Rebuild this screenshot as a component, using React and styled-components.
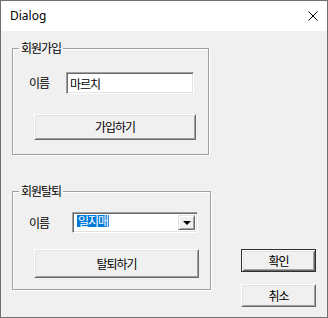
import React from "react";
import styled, { createGlobalStyle, css } from "styled-components";

const Global = createGlobalStyle`
  html, body { margin: 0; padding: 0; background: #f0f0f0; }
  * { box-sizing: border-box; }
`;

const KFONT = `"Noto Sans CJK KR", "Noto Sans", sans-serif`;

const Window = styled.div`
  width: 328px;
  height: 318px;
  border: 1px solid #6f6f6f;
  display: flex;
  flex-direction: column;
  background: #f0f0f0;
`;

const TitleBar = styled.div`
  height: 30px;
  flex: none;
  background: #ffffff;
  display: flex;
  align-items: center;
  justify-content: space-between;
  padding: 0 9px 0 9px;
  font-family: "Noto Sans", sans-serif;
  font-size: 12px;
  color: #000;
`;

const Title = styled.span`
  line-height: 16px;
  margin-top: -1px;
`;

const CloseIcon = styled.svg`
  width: 10px;
  height: 10px;
  display: block;
`;

const Client = styled.div`
  flex: 1;
  display: flex;
  padding: 17px 0 0 11px;
  font-family: ${KFONT};
  font-size: 12px;
  color: #000;
`;

const LeftCol = styled.div`
  display: flex;
  flex-direction: column;
  gap: 36px;
`;

const RightCol = styled.div`
  display: flex;
  flex-direction: column;
  gap: 12px;
  margin-left: 30px;
  padding-top: 201px;
`;

const Group = styled.div`
  position: relative;
  width: ${(p) => p.$w}px;
  height: ${(p) => p.$h}px;
  border: 1px solid #a0a0a0;
  box-shadow: inset 1px 1px 0 #ffffff, 1px 1px 0 #ffffff;
  padding: ${(p) => p.$pt}px 0 0 16px;
`;

const Legend = styled.span`
  position: absolute;
  top: -9px;
  left: 6px;
  padding: 0 2px;
  background: #f0f0f0;
  line-height: 16px;
  letter-spacing: -1px;
`;

const Row = styled.div`
  display: flex;
  align-items: center;
  height: ${(p) => p.$h}px;
`;

const Label = styled.span`
  width: ${(p) => p.$w}px;
  letter-spacing: -1px;
  line-height: 16px;
`;

const sunken = css`
  background: #ffffff;
  border: 1px solid;
  border-color: #a0a0a0 #ffffff #ffffff #a0a0a0;
  box-shadow: inset 1px 1px 0 #696969, inset -1px -1px 0 #e3e3e3;
`;

const Edit = styled.div`
  ${sunken};
  width: ${(p) => p.$w}px;
  height: ${(p) => p.$h}px;
  padding: 0 0 0 3px;
  display: flex;
  align-items: center;
  letter-spacing: -1px;
`;

const Combo = styled.div`
  ${sunken};
  width: ${(p) => p.$w}px;
  height: ${(p) => p.$h}px;
  padding: 2px 2px 2px 4px;
  display: flex;
  align-items: stretch;
  justify-content: space-between;
`;

const Selected = styled.span`
  background: #0078d7;
  color: #ffffff;
  letter-spacing: -1px;
  line-height: 12px;
  padding: 0 1px;
  display: flex;
  align-items: center;
  margin: 0 0 3px 0;
`;

const DropButton = styled.div`
  width: 17px;
  background: #f0f0f0;
  border: 1px solid;
  border-color: #e3e3e3 #696969 #696969 #e3e3e3;
  box-shadow: inset 1px 1px 0 #ffffff, inset -1px -1px 0 #a0a0a0;
  display: flex;
  align-items: center;
  justify-content: center;
`;

const Arrow = styled.span`
  width: 0;
  height: 0;
  border-left: 4px solid transparent;
  border-right: 4px solid transparent;
  border-top: 4px solid #000;
  margin-top: 1px;
`;

const Button = styled.div`
  width: ${(p) => p.$w}px;
  height: ${(p) => p.$h}px;
  margin: ${(p) => p.$m || "0"};
  background: #f0f0f0;
  border: 1px solid;
  border-color: #ffffff #696969 #696969 #ffffff;
  box-shadow: inset 1px 1px 0 #e3e3e3, inset -1px -1px 0 #a0a0a0;
  display: flex;
  align-items: center;
  justify-content: center;
  letter-spacing: -1px;
  line-height: 16px;
  ${(p) =>
    p.$default &&
    css`
      border: 1px solid #303030;
      box-shadow: inset 1px 1px 0 #ffffff, inset -1px -1px 0 #696969,
        inset 2px 2px 0 #e3e3e3, inset -2px -2px 0 #a0a0a0;
    `}
`;

export default function App() {
  return (
    <>
      <Global />
      <Window>
        <TitleBar>
          <Title>Dialog</Title>
          <CloseIcon viewBox="0 0 10 10">
            <path d="M0.5 0.5 L9.5 9.5 M9.5 0.5 L0.5 9.5" stroke="#000" strokeWidth="1" fill="none" />
          </CloseIcon>
        </TitleBar>
        <Client>
          <LeftCol>
            <Group $w={197} $h={107} $pt={23}>
              <Legend>회원가입</Legend>
              <Row $h={22}>
                <Label $w={37}>이름</Label>
                <Edit $w={128} $h={22}>마르치</Edit>
              </Row>
              <Button $w={162} $h={26} $m="20px 0 0 5px">가입하기</Button>
            </Group>
            <Group $w={199} $h={99} $pt={20}>
              <Legend>회원탈퇴</Legend>
              <Row $h={21}>
                <Label $w={43}>이름</Label>
                <Combo $w={126} $h={21}>
                  <Selected>일지매</Selected>
                  <DropButton>
                    <Arrow />
                  </DropButton>
                </Combo>
              </Row>
              <Button $w={165} $h={29} $m="16px 0 0 5px">탈퇴하기</Button>
            </Group>
          </LeftCol>
          <RightCol>
            <Button $w={75} $h={23} $default>확인</Button>
            <Button $w={75} $h={23}>취소</Button>
          </RightCol>
        </Client>
      </Window>
    </>
  );
}
